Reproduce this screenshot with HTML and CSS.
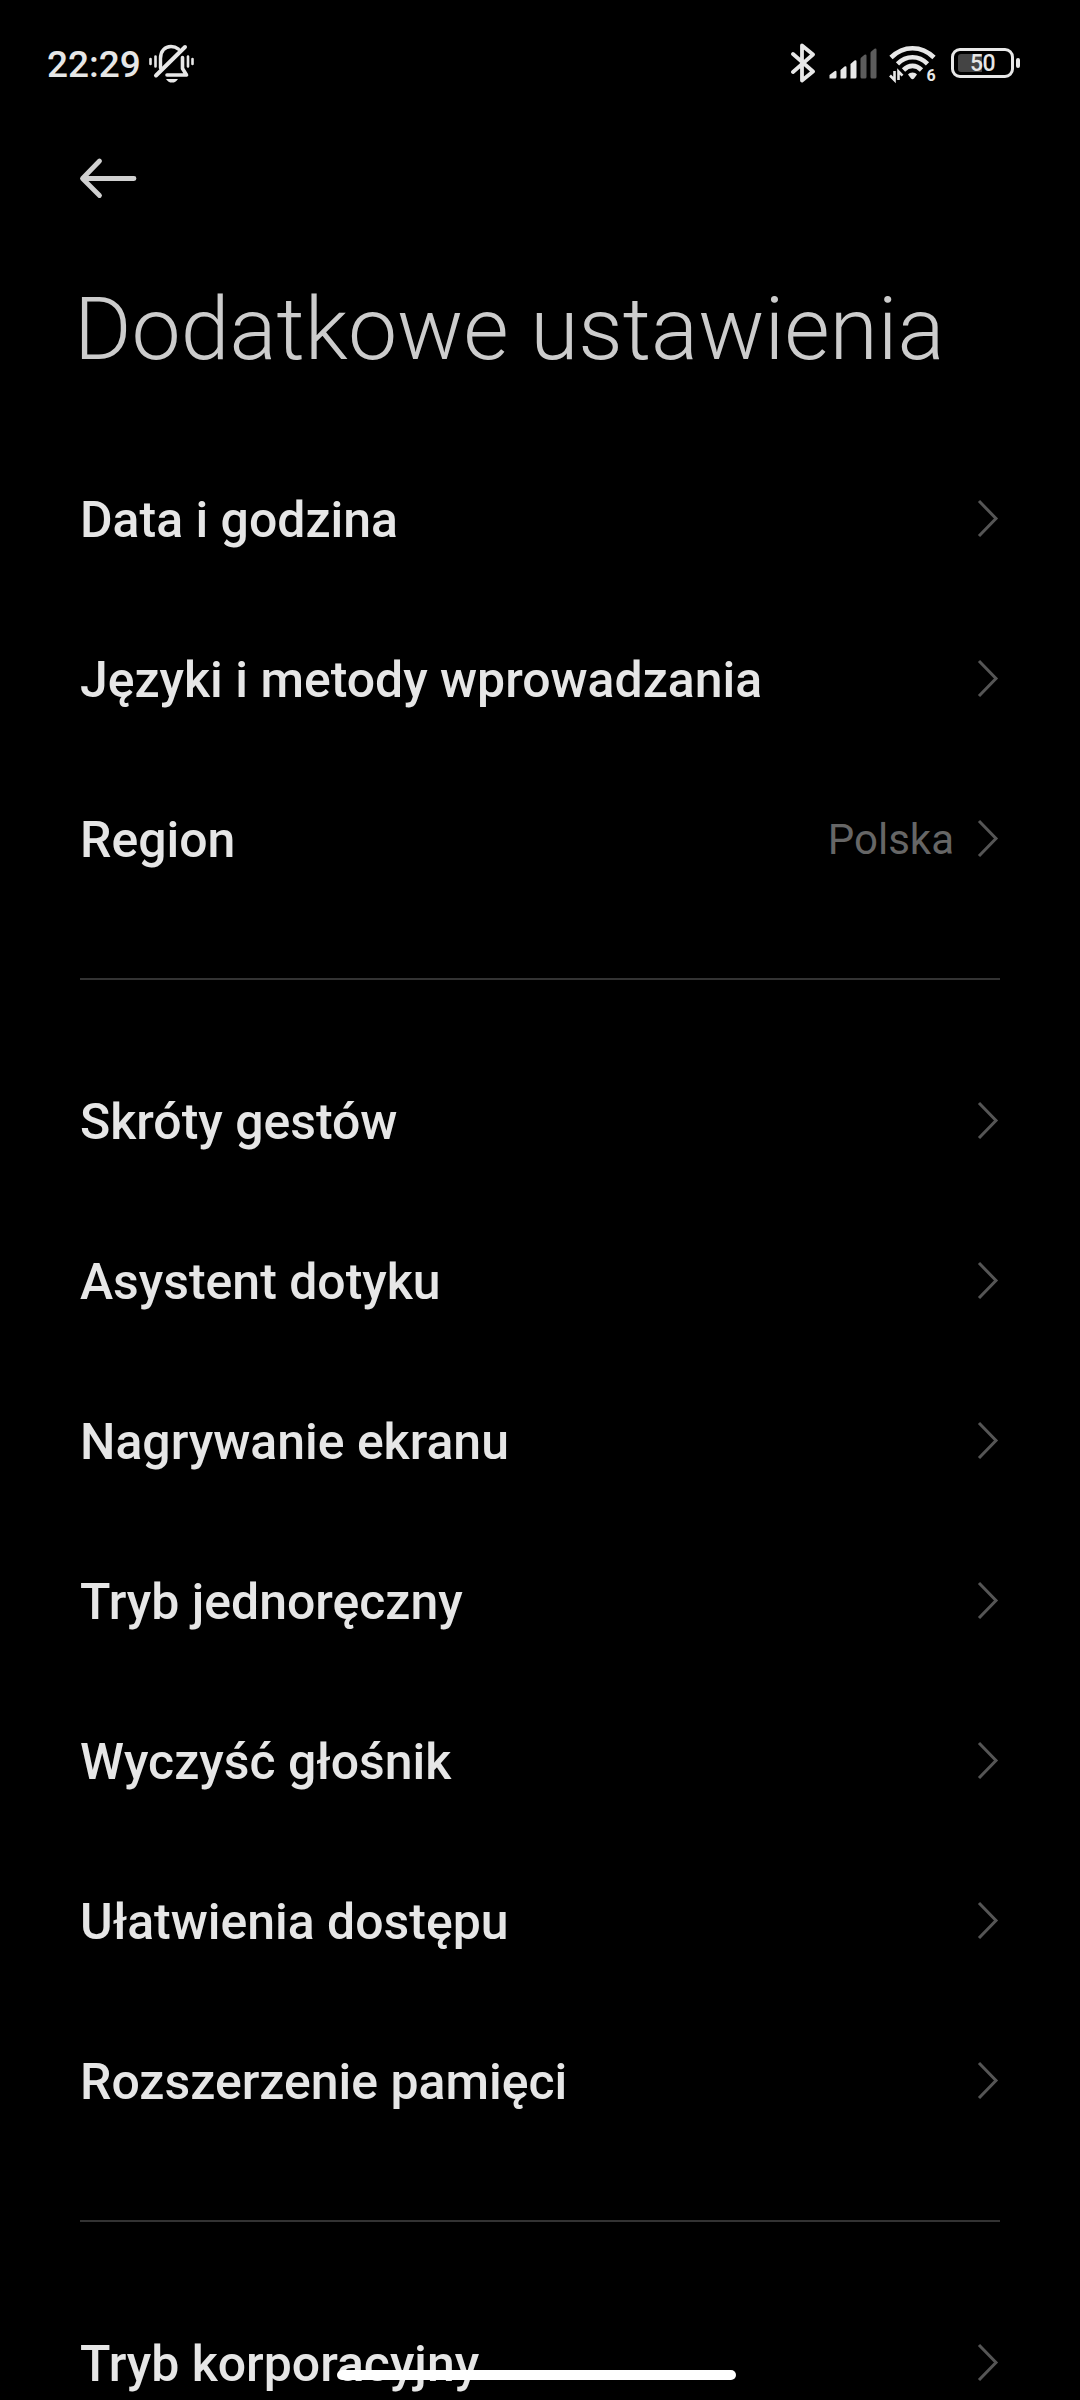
FILE: index.html
```html
<!DOCTYPE html>
<html lang="pl">
<head>
  <meta charset="UTF-8" />
  <title>Dodatkowe ustawienia</title>
  <meta name="viewport" content="width=device-width, initial-scale=1.0" />
  <link rel="stylesheet" href="styles.css">
</head>
<body>

  <svg width="0" height="0" class="sprite">
    <symbol id="chevron" viewBox="0 0 24 40">
      <path d="M3 3 L20 20.500 L3 38" fill="none" stroke="currentColor" stroke-width="3" />
    </symbol>
  </svg>

  <div class="status-bar">
    <span class="time">22:29</span>
    <svg class="icon-mute" width="46" height="40" viewBox="0 0 46 40">
      <g fill="none" stroke="#e8e8e8" stroke-linecap="round" stroke-linejoin="round">
        <path d="M2.500 15v5M7.500 12.500v10M40 12.500v10M44.500 15v5" stroke-width="2.600" />
        <path d="M12.500 24V14.500C12.500 7 17 2.500 23 2.500c3 0 5.500 1 7.500 2.600" stroke-width="3.400" />
        <path d="M34.500 13.500v11l4 6.500H19" stroke-width="3.600" />
        <path d="M37 3 L8 31.500" stroke-width="4" />
      </g>
      <path d="M18 35h12c-1.500 2.500-3.500 3.600-6 3.600s-4.500-1.100-6-3.600z" fill="#e8e8e8" />
    </svg>

    <div class="status-right">
      <svg width="26" height="40" viewBox="0 0 26 40">
        <path d="M3 11 L23 28.500 L12 37.500 V2.500 L23 11.500 L3 29" fill="none" stroke="#e8e8e8" stroke-width="3.800" stroke-linecap="round" stroke-linejoin="round" />
      </svg>
      <svg class="icon-signal" width="48" height="40" viewBox="0 0 48 40">
        <path d="M.5 35.500V32l5-3.800q2-1 2 1V34q0 1.500-1.500 1.500zM11.500 35.500V27l4-3.400q2-1 2 1V34q0 1.500-1.500 1.500zM21.500 35.500V21l4-3.400q2-1 2 1V34q0 1.500-1.500 1.500z" fill="#e8e8e8" />
        <path d="M31.500 34V16q0-1 1-1.800l3-2.400q2-1 2 1V34q0 1.500-1.500 1.500h-3q-1.500 0-1.500-1.500zM41.500 34V10q0-1 1-1.800l3-2.400q2-1 2 1V34q0 1.500-1.500 1.500h-3q-1.500 0-1.500-1.500z" fill="#5c5c5c" />
      </svg>
      <svg class="icon-wifi" width="48" height="44" viewBox="0 -2 48 44">
        <g fill="none" stroke="#e8e8e8" stroke-width="4.600">
          <path d="M2 14.500C8 8.500 15 5.200 23.500 5.200S39 8.500 45 14.500" />
          <path d="M8.500 20.800c4.200-4.200 9-6.600 15-6.600s10.800 2.400 15 6.600" />
          <path d="M14.500 27c2.600-2.600 5.400-4.100 9-4.100s6.400 1.500 9 4.100" />
        </g>
        <path d="M23.500 29.500c2 0 3.500.7 4.500 2l-3 4q-1.500 1.400-3 0l-3-4c1-1.300 2.500-2 4.500-2z" fill="#e8e8e8" />
        <path d="M5.500 28v9L1 32.500M9.500 37v-8.500l4 4.200" fill="none" stroke="#e8e8e8" stroke-width="2.600" />
        <text x="37.500" y="37.500" class="wifi-gen">6</text>
      </svg>
      <div class="battery">
        <span class="battery-level"></span>
        <span class="battery-text">50</span>
      </div>
      <span class="battery-tip"></span>
    </div>
  </div>

  <div class="nav">
    <svg width="60" height="44" viewBox="0 0 60 44">
      <path d="M20.500 4 L3.500 21.500 L20.500 38.500 M4.500 21.500 H55" fill="none" stroke="#d0d0d0" stroke-width="4.800" stroke-linecap="round" stroke-linejoin="round" />
    </svg>
  </div>

  <h1>Dodatkowe ustawienia</h1>

  <div class="group">
    <div class="row"><span class="label">Data i godzina</span><svg class="chevron"><use href="#chevron" /></svg></div>
    <div class="row"><span class="label">Języki i metody wprowadzania</span><svg class="chevron"><use href="#chevron" /></svg></div>
    <div class="row"><span class="label">Region</span><span class="value">Polska</span><svg class="chevron"><use href="#chevron" /></svg></div>
  </div>

  <div class="group">
    <div class="row"><span class="label">Skróty gestów</span><svg class="chevron"><use href="#chevron" /></svg></div>
    <div class="row"><span class="label">Asystent dotyku</span><svg class="chevron"><use href="#chevron" /></svg></div>
    <div class="row"><span class="label">Nagrywanie ekranu</span><svg class="chevron"><use href="#chevron" /></svg></div>
    <div class="row"><span class="label">Tryb jednoręczny</span><svg class="chevron"><use href="#chevron" /></svg></div>
    <div class="row"><span class="label">Wyczyść głośnik</span><svg class="chevron"><use href="#chevron" /></svg></div>
    <div class="row"><span class="label">Ułatwienia dostępu</span><svg class="chevron"><use href="#chevron" /></svg></div>
    <div class="row"><span class="label">Rozszerzenie pamięci</span><svg class="chevron"><use href="#chevron" /></svg></div>
  </div>

  <div class="group">
    <div class="row"><span class="label">Tryb korporacyjny</span><svg class="chevron"><use href="#chevron" /></svg></div>
  </div>

  <div class="home-bar"></div>

</body>
</html>
```

FILE: styles.css
```css
body {
  position: relative;
  margin: 0;
  height: 2400px;
  overflow: hidden;
  background: #000;
  color: #e6e6e6;
  font-family: Roboto, sans-serif;
}

svg {
  display: block;
  flex-shrink: 0;
}

.sprite {
  position: absolute;
}

.status-bar {
  display: flex;
  align-items: center;
  height: 128px;
  padding: 0 60px 0 47px;
}

.time {
  font-size: 37px;
  font-weight: 500;
}

.icon-mute {
  margin-left: 7px;
}

.status-right {
  display: flex;
  align-items: center;
  margin-left: auto;
  margin-bottom: 2px;
}

.icon-signal {
  margin-left: 13px;
}

.icon-wifi {
  margin-left: 12px;
}

.wifi-gen {
  font-size: 16px;
  font-weight: 700;
  fill: #e8e8e8;
}

.battery {
  display: flex;
  align-items: center;
  justify-content: center;
  box-sizing: border-box;
  position: relative;
  width: 63px;
  height: 30px;
  margin-left: 14px;
  border: 3px solid #e8e8e8;
  border-radius: 9px;
}

.battery-level {
  position: absolute;
  left: 4px;
  top: 3px;
  width: 24px;
  height: 18px;
  background: #444;
  border-radius: 3px 0 0 3px;
}

.battery-text {
  position: relative;
  font-size: 23px;
  font-weight: 500;
  letter-spacing: -0.5px;
}

.battery-tip {
  width: 4px;
  height: 10px;
  margin-left: 2px;
  background: #e8e8e8;
  border-radius: 2px;
}

.nav {
  height: 128px;
  padding: 29px 0 0 79px;
  box-sizing: border-box;
}

h1 {
  margin: 0;
  height: 184px;
  padding: 21px 0 0 74px;
  box-sizing: border-box;
  color: #ccc;
  font-size: 87.8px;
  font-weight: 300;
  line-height: 104px;
  white-space: nowrap;
}

.group {
  margin: 0 80px;
}

.group + .group {
  margin-top: 58px;
  padding-top: 62px;
  border-top: 2px solid #333;
}

.row {
  display: flex;
  align-items: center;
  height: 160px;
}

.label {
  flex: 1;
  font-size: 49.95px;
  font-weight: 500;
  white-space: nowrap;
}

.value {
  margin-right: 22px;
  margin-bottom: 2px;
  color: #666;
  font-size: 42px;
}

.chevron {
  width: 24px;
  height: 40px;
  margin-bottom: 4px;
  color: #555;
}

.home-bar {
  position: absolute;
  left: 337px;
  top: 2370px;
  width: 399px;
  height: 10px;
  background: #fff;
  border-radius: 5px;
}
```
